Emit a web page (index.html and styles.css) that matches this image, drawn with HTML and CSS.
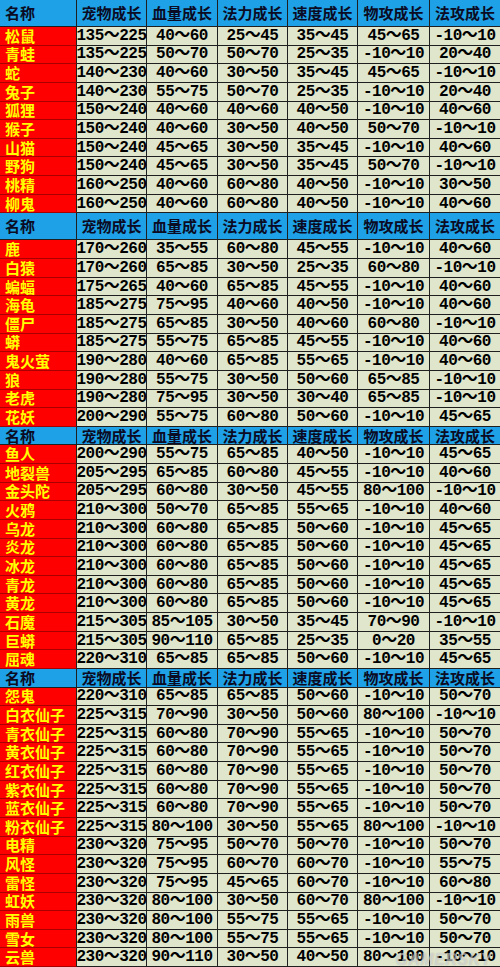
FILE: index.html
```html
<!DOCTYPE html>
<html lang="zh-CN">
<head>
<meta charset="utf-8">
<title>宠物成长表</title>
<link rel="stylesheet" href="styles.css">
</head>
<body>
<div class="sheet">
  <div class="row head tall"><div class="nm">名称</div><div>宠物成长</div><div>血量成长</div><div>法力成长</div><div>速度成长</div><div>物攻成长</div><div>法攻成长</div></div>
  <div class="row"><div class="nm">松鼠</div><div>135～225</div><div>40～60</div><div>25～45</div><div>35～45</div><div>45～65</div><div>-10～10</div></div>
  <div class="row"><div class="nm">青蛙</div><div>135～225</div><div>50～70</div><div>50～70</div><div>25～35</div><div>-10～10</div><div>20～40</div></div>
  <div class="row"><div class="nm">蛇</div><div>140～230</div><div>40～60</div><div>30～50</div><div>35～45</div><div>45～65</div><div>-10～10</div></div>
  <div class="row"><div class="nm">兔子</div><div>140～230</div><div>55～75</div><div>50～70</div><div>25～35</div><div>-10～10</div><div>20～40</div></div>
  <div class="row"><div class="nm">狐狸</div><div>150～240</div><div>40～60</div><div>40～60</div><div>40～50</div><div>-10～10</div><div>40～60</div></div>
  <div class="row"><div class="nm">猴子</div><div>150～240</div><div>40～60</div><div>30～50</div><div>40～50</div><div>50～70</div><div>-10～10</div></div>
  <div class="row"><div class="nm">山猫</div><div>150～240</div><div>45～65</div><div>30～50</div><div>35～45</div><div>-10～10</div><div>40～60</div></div>
  <div class="row"><div class="nm">野狗</div><div>150～240</div><div>45～65</div><div>30～50</div><div>35～45</div><div>50～70</div><div>-10～10</div></div>
  <div class="row"><div class="nm">桃精</div><div>160～250</div><div>40～60</div><div>60～80</div><div>40～50</div><div>-10～10</div><div>30～50</div></div>
  <div class="row"><div class="nm">柳鬼</div><div>160～250</div><div>40～60</div><div>60～80</div><div>40～50</div><div>-10～10</div><div>40～60</div></div>

  <div class="row head tall"><div class="nm">名称</div><div>宠物成长</div><div>血量成长</div><div>法力成长</div><div>速度成长</div><div>物攻成长</div><div>法攻成长</div></div>
  <div class="row"><div class="nm">鹿</div><div>170～260</div><div>35～55</div><div>60～80</div><div>45～55</div><div>-10～10</div><div>40～60</div></div>
  <div class="row"><div class="nm">白猿</div><div>170～260</div><div>65～85</div><div>30～50</div><div>25～35</div><div>60～80</div><div>-10～10</div></div>
  <div class="row"><div class="nm">蝙蝠</div><div>175～265</div><div>40～60</div><div>65～85</div><div>45～55</div><div>-10～10</div><div>40～60</div></div>
  <div class="row"><div class="nm">海龟</div><div>185～275</div><div>75～95</div><div>40～60</div><div>40～50</div><div>-10～10</div><div>40～60</div></div>
  <div class="row"><div class="nm">僵尸</div><div>185～275</div><div>65～85</div><div>30～50</div><div>40～60</div><div>60～80</div><div>-10～10</div></div>
  <div class="row"><div class="nm">蟒</div><div>185～275</div><div>55～75</div><div>65～85</div><div>45～55</div><div>-10～10</div><div>40～60</div></div>
  <div class="row"><div class="nm">鬼火萤</div><div>190～280</div><div>40～60</div><div>65～85</div><div>55～65</div><div>-10～10</div><div>40～60</div></div>
  <div class="row"><div class="nm">狼</div><div>190～280</div><div>55～75</div><div>30～50</div><div>50～60</div><div>65～85</div><div>-10～10</div></div>
  <div class="row"><div class="nm">老虎</div><div>190～280</div><div>75～95</div><div>30～50</div><div>30～40</div><div>65～85</div><div>-10～10</div></div>
  <div class="row"><div class="nm">花妖</div><div>200～290</div><div>55～75</div><div>60～80</div><div>50～60</div><div>-10～10</div><div>45～65</div></div>

  <div class="row head"><div class="nm">名称</div><div>宠物成长</div><div>血量成长</div><div>法力成长</div><div>速度成长</div><div>物攻成长</div><div>法攻成长</div></div>
  <div class="row"><div class="nm">鱼人</div><div>200～290</div><div>55～75</div><div>65～85</div><div>40～50</div><div>-10～10</div><div>45～65</div></div>
  <div class="row"><div class="nm">地裂兽</div><div>205～295</div><div>65～85</div><div>60～80</div><div>45～55</div><div>-10～10</div><div>40～60</div></div>
  <div class="row"><div class="nm">金头陀</div><div>205～295</div><div>60～80</div><div>30～50</div><div>45～55</div><div>80～100</div><div>-10～10</div></div>
  <div class="row"><div class="nm">火鸦</div><div>210～300</div><div>50～70</div><div>65～85</div><div>55～65</div><div>-10～10</div><div>40～60</div></div>
  <div class="row"><div class="nm">乌龙</div><div>210～300</div><div>60～80</div><div>65～85</div><div>50～60</div><div>-10～10</div><div>45～65</div></div>
  <div class="row"><div class="nm">炎龙</div><div>210～300</div><div>60～80</div><div>65～85</div><div>50～60</div><div>-10～10</div><div>45～65</div></div>
  <div class="row"><div class="nm">冰龙</div><div>210～300</div><div>60～80</div><div>65～85</div><div>50～60</div><div>-10～10</div><div>45～65</div></div>
  <div class="row"><div class="nm">青龙</div><div>210～300</div><div>60～80</div><div>65～85</div><div>50～60</div><div>-10～10</div><div>45～65</div></div>
  <div class="row"><div class="nm">黄龙</div><div>210～300</div><div>60～80</div><div>65～85</div><div>50～60</div><div>-10～10</div><div>45～65</div></div>
  <div class="row"><div class="nm">石魔</div><div>215～305</div><div>85～105</div><div>30～50</div><div>35～45</div><div>70～90</div><div>-10～10</div></div>
  <div class="row"><div class="nm">巨蟒</div><div>215～305</div><div>90～110</div><div>65～85</div><div>25～35</div><div>0～20</div><div>35～55</div></div>
  <div class="row"><div class="nm">屈魂</div><div>220～310</div><div>65～85</div><div>65～85</div><div>50～60</div><div>-10～10</div><div>45～65</div></div>

  <div class="row head"><div class="nm">名称</div><div>宠物成长</div><div>血量成长</div><div>法力成长</div><div>速度成长</div><div>物攻成长</div><div>法攻成长</div></div>
  <div class="row"><div class="nm">怨鬼</div><div>220～310</div><div>65～85</div><div>65～85</div><div>50～60</div><div>-10～10</div><div>50～70</div></div>
  <div class="row"><div class="nm">白衣仙子</div><div>225～315</div><div>70～90</div><div>30～50</div><div>50～60</div><div>80～100</div><div>-10～10</div></div>
  <div class="row"><div class="nm">青衣仙子</div><div>225～315</div><div>60～80</div><div>70～90</div><div>55～65</div><div>-10～10</div><div>50～70</div></div>
  <div class="row"><div class="nm">黄衣仙子</div><div>225～315</div><div>60～80</div><div>70～90</div><div>55～65</div><div>-10～10</div><div>50～70</div></div>
  <div class="row"><div class="nm">红衣仙子</div><div>225～315</div><div>60～80</div><div>70～90</div><div>55～65</div><div>-10～10</div><div>50～70</div></div>
  <div class="row"><div class="nm">紫衣仙子</div><div>225～315</div><div>60～80</div><div>70～90</div><div>55～65</div><div>-10～10</div><div>50～70</div></div>
  <div class="row"><div class="nm">蓝衣仙子</div><div>225～315</div><div>60～80</div><div>70～90</div><div>55～65</div><div>-10～10</div><div>50～70</div></div>
  <div class="row"><div class="nm">粉衣仙子</div><div>225～315</div><div>80～100</div><div>30～50</div><div>55～65</div><div>80～100</div><div>-10～10</div></div>
  <div class="row"><div class="nm">电精</div><div>230～320</div><div>75～95</div><div>50～70</div><div>50～70</div><div>-10～10</div><div>50～70</div></div>
  <div class="row"><div class="nm">风怪</div><div>230～320</div><div>75～95</div><div>60～70</div><div>60～70</div><div>-10～10</div><div>55～75</div></div>
  <div class="row"><div class="nm">雷怪</div><div>230～320</div><div>75～95</div><div>45～65</div><div>60～70</div><div>-10～10</div><div>60～80</div></div>
  <div class="row"><div class="nm">虹妖</div><div>230～320</div><div>80～100</div><div>30～50</div><div>60～70</div><div>80～100</div><div>-10～10</div></div>
  <div class="row"><div class="nm">雨兽</div><div>230～320</div><div>80～100</div><div>55～75</div><div>55～65</div><div>-10～10</div><div>50～70</div></div>
  <div class="row"><div class="nm">雪女</div><div>230～320</div><div>80～100</div><div>55～75</div><div>55～65</div><div>-10～10</div><div>50～70</div></div>
  <div class="row"><div class="nm">云兽</div><div>230～320</div><div>90～110</div><div>30～50</div><div>40～50</div><div>80～100</div><div>-10～10</div></div>

  <div class="watermark">GAMERSKY</div>
</div>
</body>
</html>
```

FILE: styles.css
```css
html, body {
  margin: 0;
  padding: 0;
  background: #ffffff;
}

.sheet {
  position: relative;
  width: 500px;
  height: 967px;
  overflow: hidden;
}

.row {
  display: grid;
  grid-template-columns: 77px 70px 71px 70px 70px 72px 70px;
  height: 18.65px;
}

.row > div {
  box-sizing: border-box;
  display: flex;
  align-items: center;
  justify-content: center;
  white-space: nowrap;
  background: #dfe6cc;
  color: #000000;
  border-right: 1px solid #1f1f1f;
  border-bottom: 1px solid #1f1f1f;
  font-family: "Liberation Mono", "Noto Sans CJK SC", monospace;
  font-weight: bold;
  font-size: 16px;
  letter-spacing: -0.5px;
  line-height: 16px;
}

.row > div:last-child {
  border-right: 0;
}

.row > .nm {
  justify-content: flex-start;
  padding-left: 5px;
  background: #ff0000;
  color: #ffff00;
  border-bottom-color: #a80000;
  border-right-color: #1f1f1f;
  font-family: "Noto Sans CJK SC", sans-serif;
  font-size: 15px;
  letter-spacing: 0;
}

.head {
  height: 18.5px;
}

.head.tall {
  height: 27px;
}

.head > div,
.head > .nm {
  background: #1ea1e6;
  color: #0b0b24;
  font-family: "Noto Sans CJK SC", sans-serif;
  font-size: 15px;
  letter-spacing: 0;
  border-bottom-color: #1f1f1f;
}

.watermark {
  position: absolute;
  right: 8px;
  bottom: -1px;
  font-family: "Liberation Sans", sans-serif;
  font-style: italic;
  font-weight: bold;
  font-size: 16px;
  letter-spacing: 0.5px;
  line-height: 16px;
  color: rgba(255, 255, 255, 0.45);
  text-shadow: 0 0 1px rgba(90, 90, 90, 0.4);
}
```
